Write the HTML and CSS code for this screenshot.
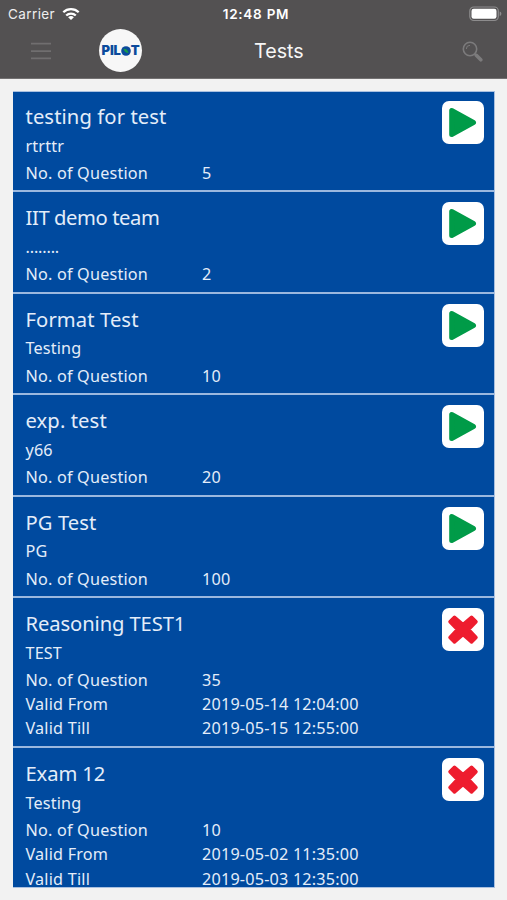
FILE: index.html
```html
<!DOCTYPE html>
<html lang="en">
<head>
<meta charset="utf-8">
<title>Tests</title>
<link rel="stylesheet" href="styles.css">
</head>
<body>
<svg class="defs" width="0" height="0" aria-hidden="true">
  <symbol id="play" viewBox="0 0 42 43"><path d="M9.700 9.500v24L31.500 21.500z" fill="#009b48" stroke="#009b48" stroke-width="5" stroke-linejoin="round"/></symbol>
  <symbol id="cross" viewBox="0 0 42 43"><path d="M12.500 9.300 21 16.500 29.500 9.300 34 13.800 26.500 21.500 34 29.500 29.500 34 21 26.500 12.500 34 8 29.500 15.500 21.500 8 13.800z" fill="#ee1c2e" stroke="#ee1c2e" stroke-width="3.500" stroke-linejoin="round"/></symbol>
</svg>
<header class="header">
  <div class="status">
    <div class="carrier"><span>Carrier</span>
      <svg width="18" height="14" viewBox="0 0 18 14" fill="none" stroke="#fff" stroke-width="2.300"><path d="M1.300 5.300a11 11 0 0 1 15.400 0M4.200 8.500a6.900 6.900 0 0 1 9.600 0"/><path d="M9 13 6.100 10.300a4.200 4.200 0 0 1 5.800 0z" fill="#fff" stroke="none"/></svg>
    </div>
    <div class="clock">12:48 PM</div>
    <svg class="battery" width="33" height="16" viewBox="0 0 33 16"><rect x=".8" y="1" width="28.500" height="13.500" rx="4" fill="none" stroke="#8d8c8d" stroke-width="1.200"/><rect x="2.500" y="2.700" width="25" height="10.100" rx="2.200" fill="#fff"/><path d="M30.700 5.500q1.700.5 1.700 2.300t-1.700 2.300z" fill="#8d8c8d"/></svg>
  </div>
  <div class="nav">
    <svg class="menu" width="20" height="18" viewBox="0 0 20 18" stroke="#706e6f" stroke-width="1.700"><path d="M0 1.700h20M0 9.200h20M0 16.300h20"/></svg>
    <div class="logo"><span>PIL</span><svg width="10" height="10" viewBox="0 0 10 10"><circle cx="5" cy="5" r="4.800" fill="#0b4a9c"/><path d="M2.400 2.700q4.200-.4 5.100 4.300Q3.300 6.600 2.400 2.700z" fill="#179b4c"/></svg><span>T</span></div>
    <h1 class="heading">Tests</h1>
    <svg class="search" width="21" height="21" viewBox="0 0 21 21" fill="none" stroke="#7c7b7c"><circle cx="8" cy="8" r="6.700" stroke-width="1.600"/><path d="M4.300 8A3.700 3.700 0 0 1 8 4.300" stroke-width="1"/><path d="m12.500 12.500 2 2" stroke-width="1.800"/><path d="m14.300 14.300 4.500 4.500" stroke-width="3.600" stroke-linecap="round"/></svg>
  </div>
</header>
<main class="list">
  <article class="test"><h2 class="wide">testing for test</h2><p>rtrttr</p><dl><dt>No. of Question</dt><dd>5</dd></dl><svg class="action"><use href="#play"/></svg></article>
  <article class="test"><h2 class="tight">IIT demo team</h2><p class="dots">........</p><dl><dt>No. of Question</dt><dd>2</dd></dl><svg class="action"><use href="#play"/></svg></article>
  <article class="test"><h2 class="wide">Format Test</h2><p>Testing</p><dl><dt>No. of Question</dt><dd>10</dd></dl><svg class="action"><use href="#play"/></svg></article>
  <article class="test"><h2 class="wide">exp. test</h2><p>y66</p><dl><dt>No. of Question</dt><dd>20</dd></dl><svg class="action"><use href="#play"/></svg></article>
  <article class="test"><h2 class="wide">PG Test</h2><p>PG</p><dl><dt>No. of Question</dt><dd>100</dd></dl><svg class="action"><use href="#play"/></svg></article>
  <article class="test dated"><h2>Reasoning TEST1</h2><p>TEST</p><dl><dt>No. of Question</dt><dd>35</dd><dt>Valid From</dt><dd>2019-05-14 12:04:00</dd><dt>Valid Till</dt><dd>2019-05-15 12:55:00</dd></dl><svg class="action"><use href="#cross"/></svg></article>
  <article class="test last"><h2>Exam 12</h2><p>Testing</p><dl><dt>No. of Question</dt><dd>10</dd><dt>Valid From</dt><dd>2019-05-02 11:35:00</dd><dt>Valid Till</dt><dd>2019-05-03 12:35:00</dd></dl><svg class="action"><use href="#cross"/></svg></article>
</main>
</body>
</html>
```
FILE: styles.css
```css
* { box-sizing: border-box; }
body { margin: 0; height: 900px; overflow: hidden; background: #f2f2f2; font-family: "Noto Sans", sans-serif; }
.defs { display: block; }
h1, h2, p, dl, dd { margin: 0; font-weight: 400; }
.header { height: 79px; background: #535152; color: #fff; font-family: Inter, sans-serif; border-bottom: 1px solid #737172; }
.status { display: grid; grid-template-columns: 1fr auto 1fr; align-items: center; height: 27px; padding: 0 5px 0 8px; font-size: 13.5px; }
.carrier { display: flex; align-items: center; gap: 6.5px; letter-spacing: .4px; color: #eee; }
.clock { padding-left: 2px; font-weight: 600; font-size: 13.5px; letter-spacing: .75px; }
.battery { justify-self: end; }
.nav { display: grid; grid-template-columns: 68px 155px 1fr 21px; align-items: center; height: 46px; padding: 0 24px 0 31px; }
.menu, .search { position: relative; top: 1px; }
.logo { display: flex; align-items: center; justify-content: center; width: 43px; height: 43px; padding-top: 1px; border-radius: 50%; background: #f7f7f7; color: #0b4a9c; font: 900 13px/1 Inter, sans-serif; letter-spacing: -.2px; }
.heading { padding-top: 1px; font-size: 19.7px; letter-spacing: 0; color: #f6f6f6; }
.list { margin: 12px 12px 0 13px; height: 797px; background: #004a9f; border: solid #a9c0e0; border-width: 1px 1px 1px 0; }
.test { display: grid; grid-template-columns: 1fr 42px; grid-template-rows: 28px 28px auto; align-content: start; height: 101.4px; padding: 12px 10px 0 12.5px; border-bottom: 2px solid #9bb8df; color: #e4edf9; }
.test:first-child { height: 100.4px; padding-top: 11.3px; }
.test.dated { height: 150.200px; }
.test.last { height: 139px; border-bottom: 0; }
.test h2 { font-size: 20.200px; line-height: 27.500px; letter-spacing: -.1px; }
.test h2.wide { letter-spacing: .1px; }
.test h2.tight { letter-spacing: -.4px; }
.test p { grid-column: 1; padding-top: .7px; font-size: 16.200px; line-height: 28px; letter-spacing: .15px; }
.test p.dots { letter-spacing: -.15px; }
.test dl { grid-column: 1; display: grid; grid-template-columns: 176.5px 1fr; margin-top: 2px; font-size: 16.200px; line-height: 24.200px; letter-spacing: .2px; white-space: nowrap; }
.action { grid-column: 2; grid-row: 1 / 4; width: 42px; height: 43px; margin: -2px 0 0; border-radius: 7px; background: #fff; }
```
